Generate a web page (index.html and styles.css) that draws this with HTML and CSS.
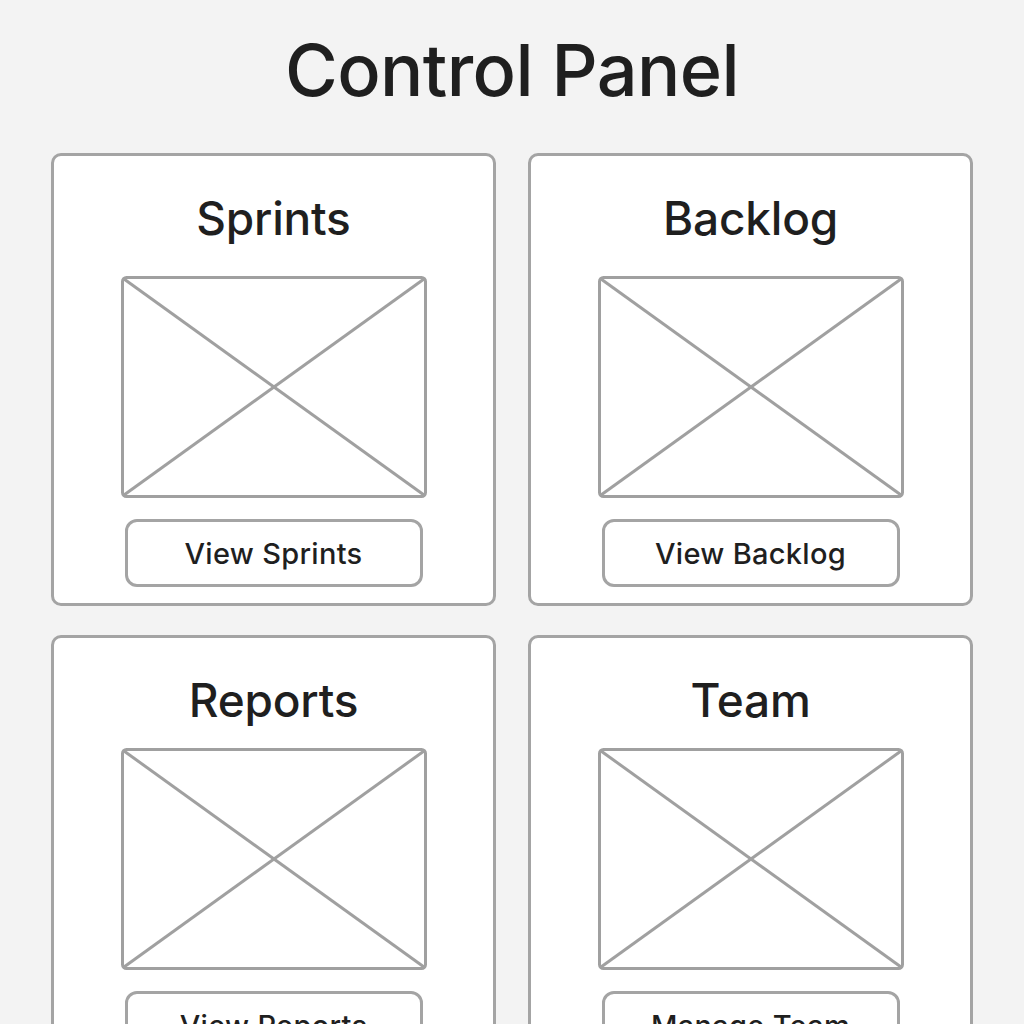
FILE: index.html
```html
<!DOCTYPE html>
<html lang="en">
<head>
<meta charset="utf-8">
<title>Control Panel</title>
<link rel="stylesheet" href="styles.css">
</head>
<body>
<h1 class="page-title">Control Panel</h1>
<main class="grid">
  <section class="card">
    <h2 class="card-title">Sprints</h2>
    <svg class="placeholder" width="306" height="222" viewBox="0 0 306 222"><rect x="1.5" y="1.5" width="303" height="219" rx="4" ry="4"/><line x1="3" y1="3" x2="303" y2="219"/><line x1="303" y1="3" x2="3" y2="219"/></svg>
    <button class="card-btn">View Sprints</button>
  </section>
  <section class="card">
    <h2 class="card-title">Backlog</h2>
    <svg class="placeholder" width="306" height="222" viewBox="0 0 306 222"><rect x="1.5" y="1.5" width="303" height="219" rx="4" ry="4"/><line x1="3" y1="3" x2="303" y2="219"/><line x1="303" y1="3" x2="3" y2="219"/></svg>
    <button class="card-btn">View Backlog</button>
  </section>
  <section class="card card-compact">
    <h2 class="card-title">Reports</h2>
    <svg class="placeholder" width="306" height="222" viewBox="0 0 306 222"><rect x="1.5" y="1.5" width="303" height="219" rx="4" ry="4"/><line x1="3" y1="3" x2="303" y2="219"/><line x1="303" y1="3" x2="3" y2="219"/></svg>
    <button class="card-btn">View Reports</button>
  </section>
  <section class="card card-compact">
    <h2 class="card-title">Team</h2>
    <svg class="placeholder" width="306" height="222" viewBox="0 0 306 222"><rect x="1.5" y="1.5" width="303" height="219" rx="4" ry="4"/><line x1="3" y1="3" x2="303" y2="219"/><line x1="303" y1="3" x2="3" y2="219"/></svg>
    <button class="card-btn">Manage Team</button>
  </section>
</main>
</body>
</html>
```
FILE: styles.css
```css
html, body {
  margin: 0;
  padding: 0;
}
body {
  background: #f3f3f3;
  font-family: Inter, "Liberation Sans", sans-serif;
  color: #1f1f1f;
  overflow: hidden;
  height: 1024px;
}
.page-title {
  margin: 0;
  padding-top: 28px;
  height: 153px;
  box-sizing: border-box;
  text-align: center;
  font-size: 72px;
  font-weight: 500;
  line-height: 84px;
  letter-spacing: -0.6px;
}
.grid {
  display: grid;
  grid-template-columns: 445px 445px;
  column-gap: 32px;
  row-gap: 29px;
  padding-left: 51px;
}
.card {
  box-sizing: border-box;
  height: 453px;
  background: #fff;
  border: 3px solid #a4a4a4;
  border-radius: 10px;
  display: flex;
  flex-direction: column;
  align-items: center;
  padding-top: 32px;
}
.card-title {
  margin: 0;
  font-size: 46px;
  font-weight: 500;
  line-height: 60px;
  letter-spacing: -0.2px;
}
.placeholder {
  display: block;
  margin-top: 28px;
}
.card-compact .placeholder {
  margin-top: 18px;
}
.placeholder rect,
.placeholder line {
  fill: none;
  stroke: #a0a0a0;
  stroke-width: 3;
}
.card-btn {
  margin-top: 21px;
  width: 298px;
  height: 68px;
  box-sizing: border-box;
  background: #fff;
  border: 3px solid #a4a4a4;
  border-radius: 12px;
  font-family: Inter, "Liberation Sans", sans-serif;
  font-size: 29px;
  font-weight: 500;
  letter-spacing: 0.3px;
  color: #1f1f1f;
  padding: 0;
}
```
